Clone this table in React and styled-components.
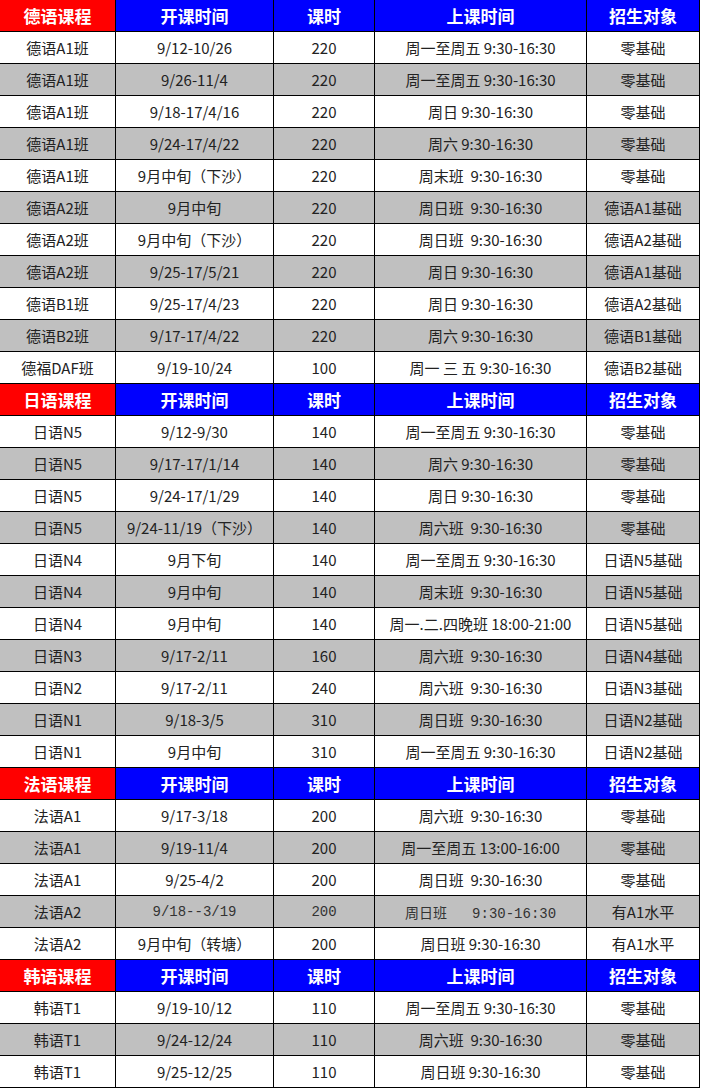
import styled, { createGlobalStyle } from "styled-components";

const GlobalStyle = createGlobalStyle`
  html, body {
    margin: 0;
    padding: 0;
    background: #fff;
  }
  body {
    font-family: "Noto Sans CJK SC", "Noto Sans", sans-serif;
  }
`;

const Sheet = styled.div`
  display: grid;
  grid-template-columns: 115px 157px 100px 211px 112px;
  grid-auto-rows: 31px;
  gap: 1px;
  width: 699px;
  background: #000;
  border-right: 1px solid #000;
  border-bottom: 1px solid #000;
`;

const Cell = styled.div`
  display: flex;
  align-items: center;
  justify-content: center;
  white-space: pre;
  font-size: 15px;
  color: #222;
  background: ${(p) => (p.$shade ? "#c0c0c0" : "#fff")};
  ${(p) =>
    p.$song &&
    `
    font-family: "Liberation Mono", "Noto Sans CJK SC", monospace;
    font-size: 14px;
    color: #333;
  `}
`;

const HeadCell = styled.div`
  display: flex;
  align-items: center;
  justify-content: center;
  font-size: 17px;
  font-weight: bold;
  color: #fff;
  background: ${(p) => (p.$lang ? "#ff0000" : "#0000ff")};
`;

const sections = [
  {
    title: "德语课程",
    rows: [
      ["德语A1班", "9/12-10/26", "220", "周一至周五 9:30-16:30", "零基础"],
      ["德语A1班", "9/26-11/4", "220", "周一至周五 9:30-16:30", "零基础"],
      ["德语A1班", "9/18-17/4/16", "220", "周日 9:30-16:30", "零基础"],
      ["德语A1班", "9/24-17/4/22", "220", "周六 9:30-16:30", "零基础"],
      ["德语A1班", "9月中旬（下沙）", "220", "周末班  9:30-16:30", "零基础"],
      ["德语A2班", "9月中旬", "220", "周日班  9:30-16:30", "德语A1基础"],
      ["德语A2班", "9月中旬（下沙）", "220", "周日班  9:30-16:30", "德语A2基础"],
      ["德语A2班", "9/25-17/5/21", "220", "周日 9:30-16:30", "德语A1基础"],
      ["德语B1班", "9/25-17/4/23", "220", "周日 9:30-16:30", "德语A2基础"],
      ["德语B2班", "9/17-17/4/22", "220", "周六 9:30-16:30", "德语B1基础"],
      ["德福DAF班", "9/19-10/24", "100", "周一 三 五 9:30-16:30", "德语B2基础"],
    ],
  },
  {
    title: "日语课程",
    rows: [
      ["日语N5", "9/12-9/30", "140", "周一至周五 9:30-16:30", "零基础"],
      ["日语N5", "9/17-17/1/14", "140", "周六 9:30-16:30", "零基础"],
      ["日语N5", "9/24-17/1/29", "140", "周日 9:30-16:30", "零基础"],
      ["日语N5", "9/24-11/19（下沙）", "140", "周六班  9:30-16:30", "零基础"],
      ["日语N4", "9月下旬", "140", "周一至周五 9:30-16:30", "日语N5基础"],
      ["日语N4", "9月中旬", "140", "周末班  9:30-16:30", "日语N5基础"],
      ["日语N4", "9月中旬", "140", "周一.二.四晚班 18:00-21:00", "日语N5基础"],
      ["日语N3", "9/17-2/11", "160", "周六班  9:30-16:30", "日语N4基础"],
      ["日语N2", "9/17-2/11", "240", "周六班  9:30-16:30", "日语N3基础"],
      ["日语N1", "9/18-3/5", "310", "周日班  9:30-16:30", "日语N2基础"],
      ["日语N1", "9月中旬", "310", "周一至周五 9:30-16:30", "日语N2基础"],
    ],
  },
  {
    title: "法语课程",
    rows: [
      ["法语A1", "9/17-3/18", "200", "周六班  9:30-16:30", "零基础"],
      ["法语A1", "9/19-11/4", "200", "周一至周五 13:00-16:00", "零基础"],
      ["法语A1", "9/25-4/2", "200", "周日班  9:30-16:30", "零基础"],
      ["法语A2", "9/18--3/19", "200", "周日班   9:30-16:30", "有A1水平", true],
      ["法语A2", "9月中旬（转塘）", "200", "周日班 9:30-16:30", "有A1水平"],
    ],
  },
  {
    title: "韩语课程",
    rows: [
      ["韩语T1", "9/19-10/12", "110", "周一至周五 9:30-16:30", "零基础"],
      ["韩语T1", "9/24-12/24", "110", "周六班  9:30-16:30", "零基础"],
      ["韩语T1", "9/25-12/25", "110", "周日班 9:30-16:30", "零基础"],
    ],
  },
];

const headings = ["开课时间", "课时", "上课时间", "招生对象"];

export default function App() {
  return (
    <>
      <GlobalStyle />
      <Sheet>
        {sections.map((sec) => [
          <HeadCell key={sec.title} $lang>
            {sec.title}
          </HeadCell>,
          ...headings.map((h) => <HeadCell key={sec.title + h}>{h}</HeadCell>),
          ...sec.rows.flatMap((row, i) => {
            const song = row[5];
            return row.slice(0, 5).map((txt, c) => (
              <Cell
                key={`${sec.title}-${i}-${c}`}
                $shade={i % 2 === 1}
                $song={song && c >= 1 && c <= 3}
              >
                {txt}
              </Cell>
            ));
          }),
        ])}
      </Sheet>
    </>
  );
}
